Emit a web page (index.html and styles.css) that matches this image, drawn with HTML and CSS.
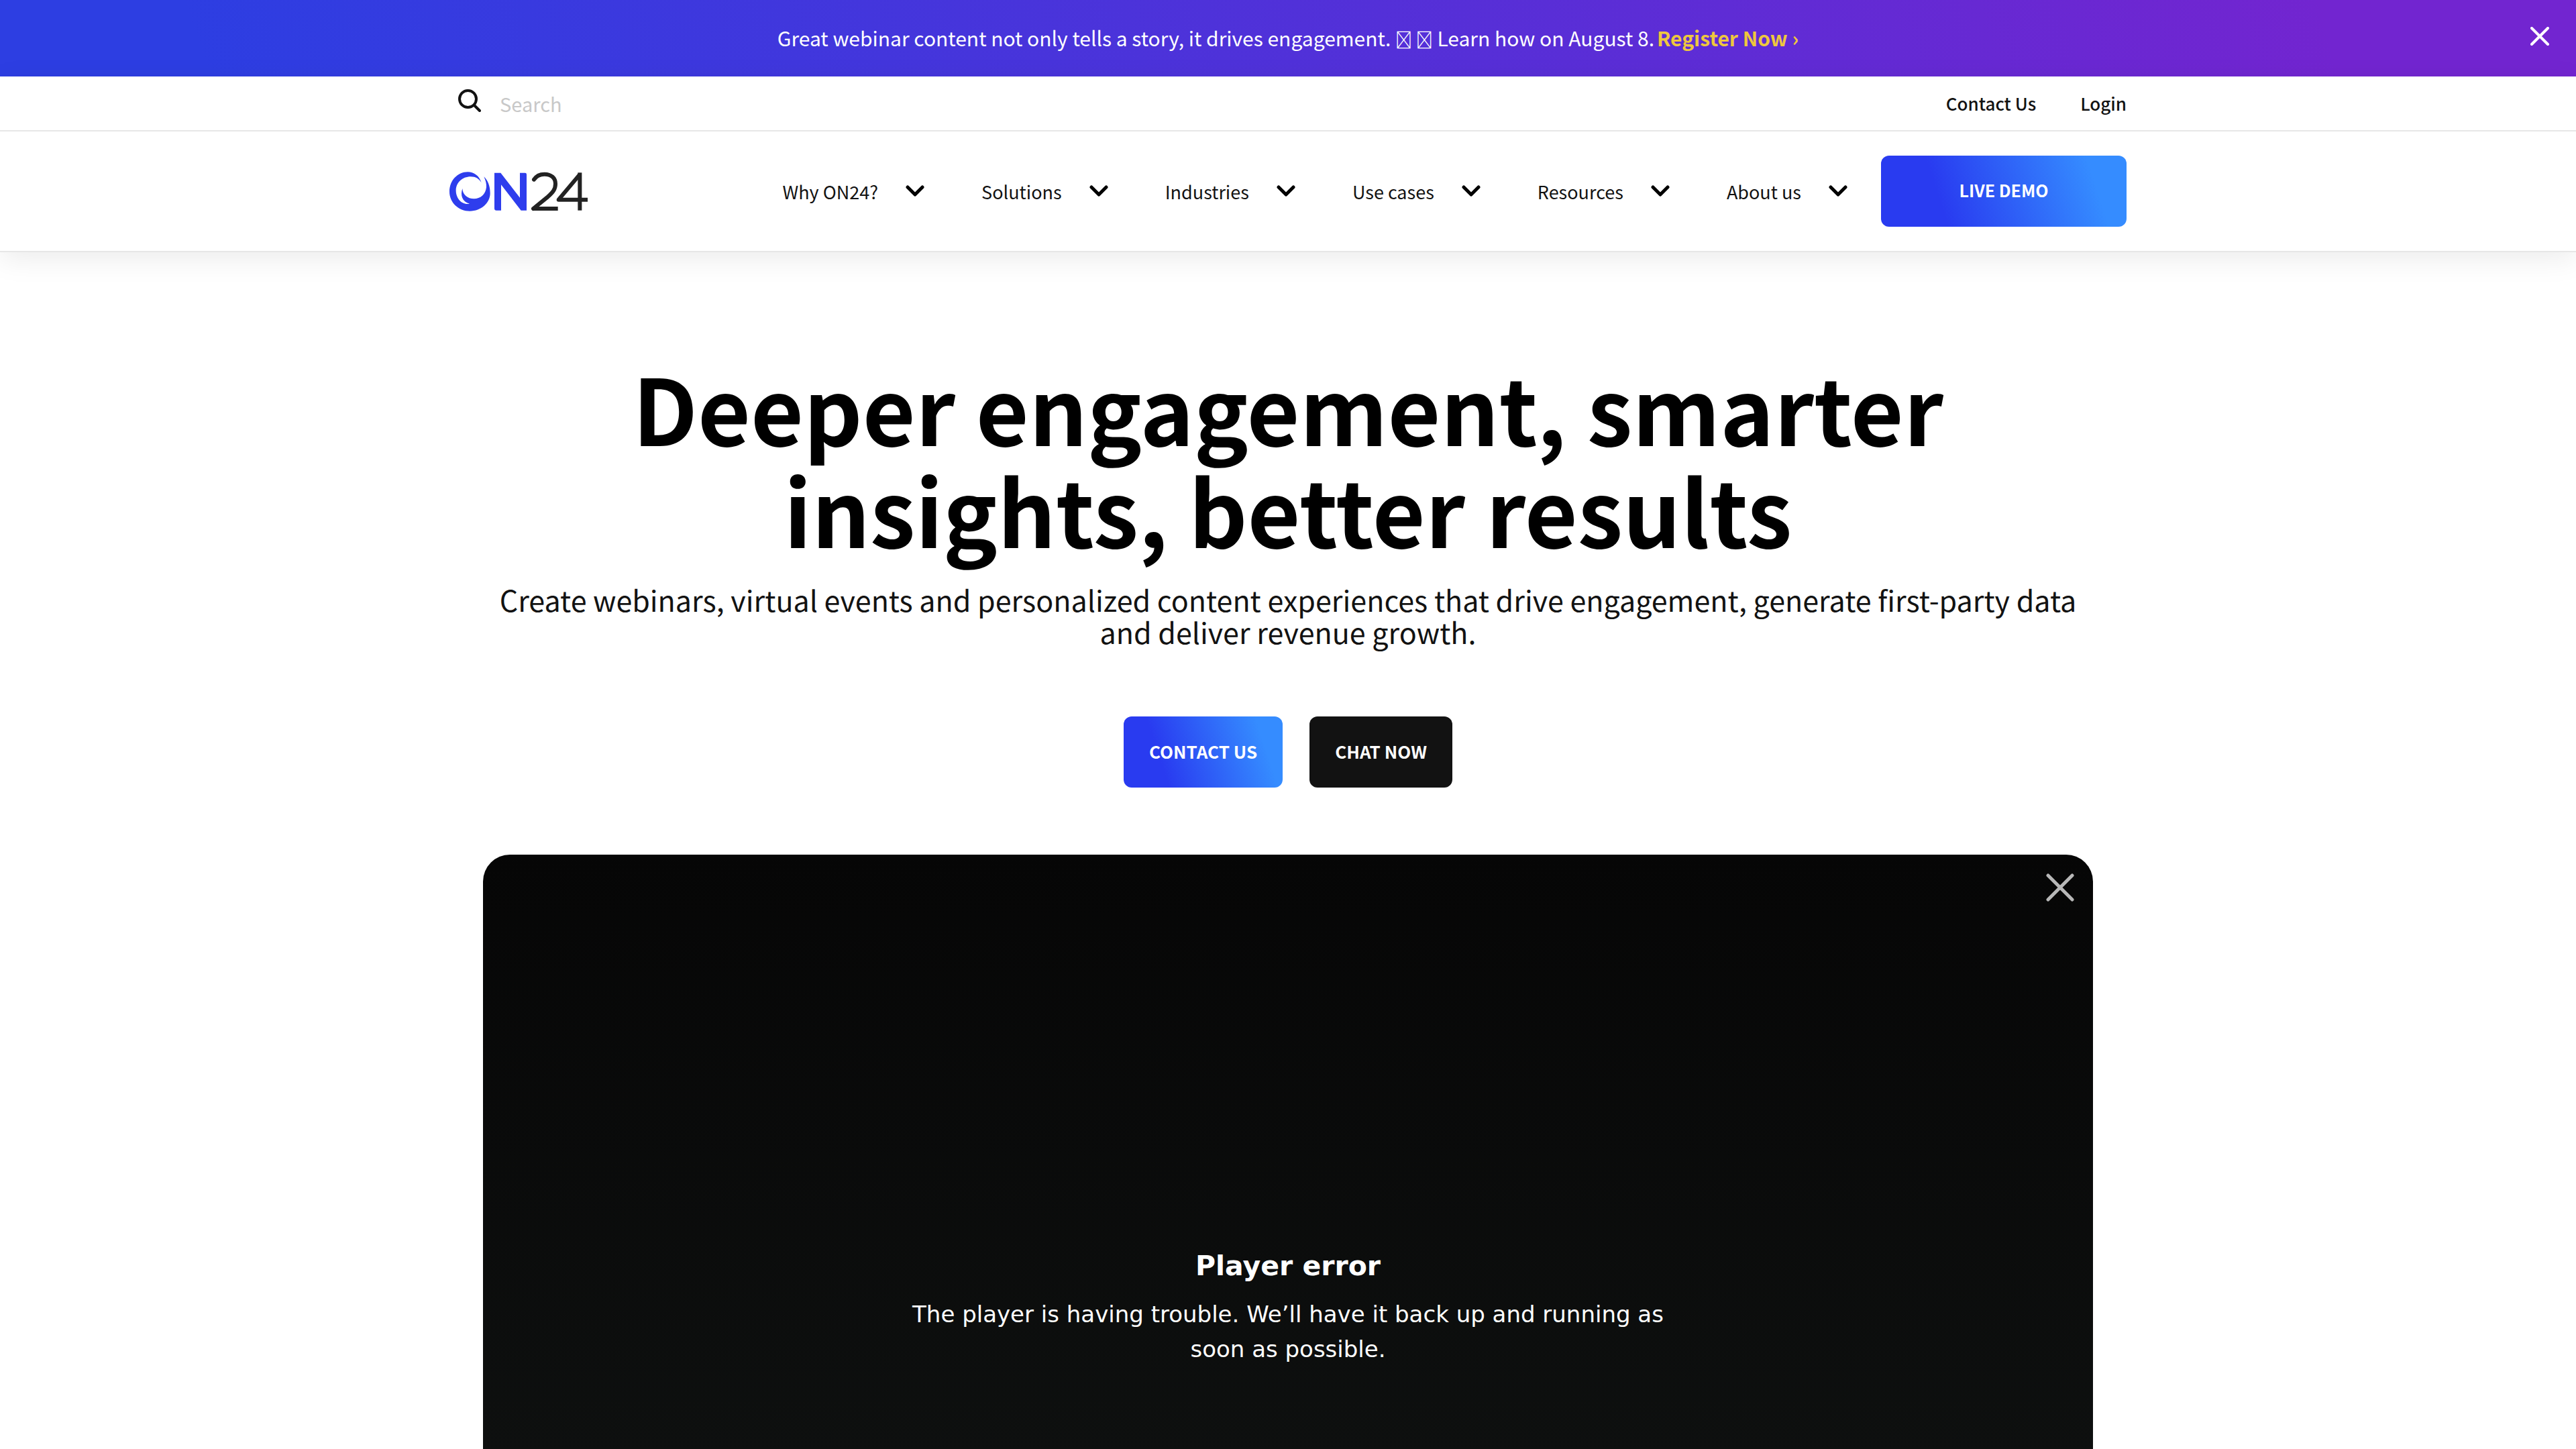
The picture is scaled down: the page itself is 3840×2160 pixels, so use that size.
FILE: index.html
```html
<!DOCTYPE html>
<html lang="en">
<head>
<meta charset="utf-8">
<title>ON24</title>
<link rel="stylesheet" href="styles.css">
</head>
<body>
<div class="page">
  <div class="banner">
    <p class="banner-text">Great webinar content not only tells a story, it drives engagement. <span class="banner-emoji">&#xE001; &#xE001;</span> Learn how on August 8.<a class="banner-link" href="#register">Register Now ›</a></p>
    <button class="banner-close" type="button" aria-label="Close announcement">
      <svg width="28" height="28" viewBox="0 0 28 28" fill="none" stroke="currentColor" stroke-width="4" stroke-linecap="round"><path d="M2 2 26 26M26 2 2 26"/></svg>
    </button>
  </div>

  <header class="header">
    <div class="topbar">
      <div class="container topbar-row">
        <form class="search" role="search">
          <label class="search-label" for="site-search" aria-label="Search">
            <svg width="34" height="34" viewBox="0 0 34 34" fill="none" stroke="currentColor" stroke-width="4" stroke-linecap="round"><circle cx="14.500" cy="14.500" r="12.500"/><path d="M24 24 32 32"/></svg>
          </label>
          <input class="search-input" id="site-search" type="search" placeholder="Search">
        </form>
        <div class="topbar-links">
          <a href="#contact">Contact Us</a>
          <a href="#login">Login</a>
        </div>
      </div>
    </div>
    <div class="mainbar">
      <div class="container mainbar-row">
        <a class="logo" href="#home" aria-label="ON24">
          <svg width="206" height="59" viewBox="90 466 618 177">
            <path fill="#2e3ded" d="M233 515C222 482 198 467 172 467C126 467 90 506 90 555C90 603 130 642 181 642C232 642 272 605 272 562C272 530 262 505 244 488C252 505 256 520 255 535C252 567 228 587 200 587C170 587 149 568 148 541C138 570 146 600 180 609C145 616 119 585 119 550C119 515 147 488 185 488C207 488 223 498 233 515Z"/>
            <path fill="#2e3ded" d="M291 471H319L405 582V471H428Q435 471 435 478V639H410L321 524V639H300Q291 639 291 630Z"/>
            <g fill="none" stroke="#222" stroke-width="18" stroke-linejoin="round">
              <path stroke-linecap="round" d="M468 501C478 485 496 477 515 477C545 477 564 494 564 520C564 544 553 558 530 578L465 631"/>
              <path d="M465 631H575"/>
              <path d="M708 591H578L672 479"/>
              <path d="M673 470V639"/>
            </g>
          </svg>
        </a>
        <nav class="nav" aria-label="Main">
          <button class="nav-item" type="button">Why ON24?<svg class="chevron" viewBox="0 0 28 18"><path d="M3 3 14 14 25 3"/></svg></button>
          <button class="nav-item" type="button">Solutions<svg class="chevron" viewBox="0 0 28 18"><path d="M3 3 14 14 25 3"/></svg></button>
          <button class="nav-item" type="button">Industries<svg class="chevron" viewBox="0 0 28 18"><path d="M3 3 14 14 25 3"/></svg></button>
          <button class="nav-item" type="button">Use cases<svg class="chevron" viewBox="0 0 28 18"><path d="M3 3 14 14 25 3"/></svg></button>
          <button class="nav-item" type="button">Resources<svg class="chevron" viewBox="0 0 28 18"><path d="M3 3 14 14 25 3"/></svg></button>
          <button class="nav-item" type="button">About us<svg class="chevron" viewBox="0 0 28 18"><path d="M3 3 14 14 25 3"/></svg></button>
        </nav>
        <a class="btn btn-primary btn-demo" href="#demo">LIVE DEMO</a>
      </div>
    </div>
  </header>

  <main class="container hero">
    <h1 class="hero-title">Deeper engagement, smarter insights, better results</h1>
    <p class="hero-text">Create webinars, virtual events and personalized content experiences that drive engagement, generate first-party data and deliver revenue growth.</p>
    <div class="hero-actions">
      <a class="btn btn-primary" href="#contact">CONTACT US</a>
      <button class="btn btn-dark" type="button">CHAT NOW</button>
    </div>
    <section class="player" aria-label="Video player">
      <button class="player-close" type="button" aria-label="Close video">
        <svg width="42" height="42" viewBox="0 0 42 42" fill="none" stroke="currentColor" stroke-width="5" stroke-linecap="round"><path d="M3 3 39 39M39 3 3 39"/></svg>
      </button>
      <div class="player-message">
        <h2 class="player-title">Player error</h2>
        <p class="player-text">The player is having trouble. We’ll have it back up and running as soon as possible.</p>
      </div>
    </section>
  </main>
</div>
</body>
</html>
```
FILE: styles.css
```css
*,
*::before,
*::after {
  box-sizing: border-box;
}

body {
  margin: 0;
  color: #121212;
  background: #fff;
  font-family: "Noto Sans CJK SC", "Noto Sans", sans-serif;
  font-size: 26px;
}

h1,
h2,
p {
  margin: 0;
}

a {
  color: inherit;
  text-decoration: none;
}

button {
  padding: 0;
  border: 0;
  background: none;
  color: inherit;
  font: inherit;
  cursor: pointer;
}

svg {
  display: block;
}

.page {
  height: 100vh;
  overflow: hidden;
}

.container {
  width: 100%;
  max-width: 2500px;
  margin: 0 auto;
}

/* Announcement banner */
.banner {
  position: relative;
  display: flex;
  align-items: center;
  justify-content: center;
  min-height: 114px;
  color: #fff;
  background: linear-gradient(72deg, #2d3ee2 8%, #7225d0 90%);
}

.banner-text {
  font-size: 30px;
  line-height: 48px;
}

.banner-emoji {
  font-size: 25px;
}

.banner-link {
  margin-left: 4px;
  color: #eec73e;
  font-weight: 700;
}

.banner-close {
  position: absolute;
  top: 40px;
  right: 40px;
}

/* Header */
.header {
  position: relative;
  background: #fff;
  border-bottom: 2px solid #e7e7e7;
  box-shadow: 0 10px 40px rgba(0, 0, 0, 0.08);
}

.topbar {
  border-bottom: 2px solid #e7e7e7;
}

.topbar-row {
  display: flex;
  align-items: center;
  justify-content: space-between;
  min-height: 80px;
}

.search {
  display: flex;
  align-items: center;
  padding-left: 13px;
}

.search-label {
  padding-bottom: 8px;
}

.search-input {
  width: 400px;
  margin-left: 28px;
  padding: 0;
  border: 0;
  outline: 0;
  background: none;
  color: #121212;
  font: inherit;
  font-size: 29px;
}

.search-input::placeholder {
  color: #c8c8c8;
}

.topbar-links {
  display: flex;
  gap: 66px;
  padding-bottom: 2px;
  font-size: 26px;
  font-weight: 500;
}

.mainbar-row {
  display: flex;
  align-items: center;
  min-height: 178px;
}

.nav {
  display: flex;
  gap: 85px;
  margin-left: auto;
  margin-right: 50px;
}

.nav-item {
  display: flex;
  align-items: center;
  gap: 41px;
  font-size: 27px;
  white-space: nowrap;
}

.chevron {
  width: 28px;
  height: 18px;
  fill: none;
  stroke: #000;
  stroke-width: 5px;
  stroke-linecap: round;
  stroke-linejoin: round;
}

/* Buttons */
.btn {
  display: flex;
  align-items: center;
  justify-content: center;
  min-height: 106px;
  padding: 0 38px 4px;
  border-radius: 12px;
  color: #fff;
  font-size: 26px;
  font-weight: 700;
}

.btn-primary {
  background: linear-gradient(72deg, #293bf0 25%, #358cff 85%);
}

.btn-dark {
  background: #121212;
}

.btn-demo {
  width: 366px;
  font-size: 25px;
}

/* Hero */
.hero {
  padding: 154px 50px 0;
  text-align: center;
}

.hero-title {
  max-width: 2100px;
  margin: 0 auto;
  color: #000;
  font-size: 136px;
  font-weight: 700;
  line-height: 152px;
}

.hero-text {
  margin-top: 35px;
  font-size: 43px;
  line-height: 48px;
}

.hero-actions {
  display: flex;
  justify-content: center;
  gap: 40px;
  margin: 103px 0 100px;
}

/* Video player */
.player {
  position: relative;
  display: flex;
  align-items: center;
  justify-content: center;
  aspect-ratio: 16 / 9;
  border-radius: 40px;
  color: #fff;
  background: linear-gradient(#060606, #121514);
  font-family: "DejaVu Sans", sans-serif;
}

.player-close {
  position: absolute;
  top: 28px;
  right: 28px;
  color: #b8b8b8;
}

.player-message {
  max-width: 1200px;
}

.player-title {
  font-size: 41px;
  font-weight: 700;
  line-height: 52px;
}

.player-text {
  margin-top: 20px;
  font-size: 34px;
  line-height: 52px;
}
```
